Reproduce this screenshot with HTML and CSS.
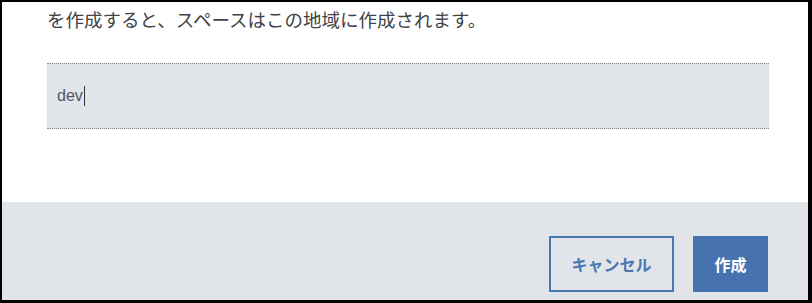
FILE: index.html
```html
<!DOCTYPE html>
<html lang="ja">
<head>
<meta charset="utf-8">
<link rel="stylesheet" href="styles.css">
</head>
<body>
<div class="frame">
  <div class="content">
    <p class="desc">を作成すると、スペースはこの地域に作成されます。</p>
    <div class="field"><span class="value">dev</span><span class="caret"></span></div>
  </div>
  <div class="footer">
    <button class="btn btn-secondary">キャンセル</button>
    <button class="btn btn-primary">作成</button>
  </div>
</div>
</body>
</html>
```
FILE: styles.css
```css
html, body {
  margin: 0;
  padding: 0;
  background: #000;
  height: 303px;
  overflow: hidden;
}
.frame {
  margin: 2px 4px 0 2px;
  height: 298px;
  background: #fff;
  display: flex;
  flex-direction: column;
  font-family: "Noto Sans CJK JP", "Noto Sans", sans-serif;
}
.content {
  padding: 4px 39px 0 45px;
  height: 200px;
  box-sizing: border-box;
  flex: none;
}
.desc {
  margin: 0;
  font-size: 18.5px;
  line-height: 26px;
  color: #3f4347;
}
.field {
  margin-top: 31px;
  height: 64px;
  background: #e1e5ea;
  border-top: 1px dotted #8a8d90;
  border-bottom: 1px dotted #8a8d90;
  display: flex;
  align-items: center;
  padding-left: 10px;
}
.value {
  font-family: "Liberation Sans", Arial, sans-serif;
  font-size: 16px;
  color: #51565c;
}
.caret {
  display: inline-block;
  width: 1px;
  height: 20px;
  background: #333;
  margin-left: 1px;
}
.footer {
  flex: 1;
  background: #e1e5ea;
  display: flex;
  justify-content: flex-end;
  align-items: flex-start;
  gap: 19px;
  padding: 34px 40px 0 0;
}
.btn {
  font-family: "Noto Sans CJK JP", sans-serif;
  font-size: 16px;
  font-weight: 700;
  height: 56px;
  box-sizing: border-box;
  cursor: pointer;
}
.btn-secondary {
  width: 125px;
  background: transparent;
  border: 2px solid #4a76b2;
  color: #4a76b2;
}
.btn-primary {
  width: 75px;
  background: #4673b0;
  border: none;
  color: #fff;
}
```
